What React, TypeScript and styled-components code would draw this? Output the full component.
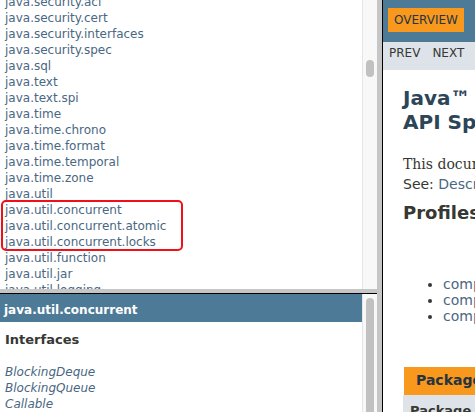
import React from "react";
import styled, { createGlobalStyle } from "styled-components";

const GlobalStyle = createGlobalStyle`
  html, body { margin: 0; padding: 0; background: #fff; }
  body {
    font-family: 'DejaVu Sans', 'Liberation Sans', Arial, sans-serif;
    font-size: 14px;
    color: #353833;
  }
  #root { width: 475px; height: 412px; overflow: hidden; }
`;

const Page = styled.div`
  display: flex;
  width: 475px;
  height: 412px;
  overflow: hidden;
`;

const LeftSet = styled.div`
  flex: 0 0 377px;
  display: flex;
  flex-direction: column;
`;

const Frame = styled.div<{ $h?: number }>`
  display: flex;
  flex: ${(p) => (p.$h ? `0 0 ${p.$h}px` : "1 1 auto")};
  min-height: 0;
  overflow: hidden;
  background: #fff;
`;

const FrameBody = styled.div`
  flex: 1;
  min-width: 0;
  overflow: hidden;
`;

const ScrollTrack = styled.div<{ $top: number }>`
  flex: 0 0 15px;
  box-sizing: border-box;
  border-left: 1px solid #e6e6e6;
  background: #f8f8f8;
  padding: ${(p) => p.$top}px 0 0 3px;
`;

const Thumb = styled.div<{ $h: number }>`
  width: 8px;
  height: ${(p) => p.$h}px;
  border-radius: 4px;
  background: #c1c1c1;
`;

const HBorder = styled.div`
  flex: 0 0 4px;
  background: #c6c6c6;
  border-bottom: 1px solid #000;
`;

const VBorder = styled.div`
  flex: 0 0 5px;
  background: #c6c6c6;
  border-right: 1px solid #000;
`;

const PackageList = styled.ul`
  list-style: none;
  margin: -7px 0 0 0;
  padding: 0 0 0 5px;
  font-size: 12px;
`;

const PackageItem = styled.li`
  padding-top: 2px;
  line-height: 14px;
  color: #4a6782;
  white-space: nowrap;
`;

const Highlight = styled.div`
  position: relative;
  &::after {
    content: "";
    position: absolute;
    left: -4px;
    top: -1px;
    width: 182px;
    height: 51px;
    box-sizing: border-box;
    border: 2px solid #f0101a;
    border-radius: 5px;
    pointer-events: none;
  }
`;

const Bar = styled.h1`
  margin: 0;
  height: 28px;
  box-sizing: border-box;
  padding: 9px 0 0 4px;
  background: #4d7a97;
  color: #fff;
  font-size: 12px;
  font-weight: bold;
  line-height: 14px;
  white-space: nowrap;
`;

const GroupHeading = styled.h2`
  margin: 10px 0 0 5px;
  font-size: 13px;
  font-weight: bold;
  color: #353833;
`;

const ClassList = styled.ul`
  list-style: none;
  margin: 16px 0 0 0;
  padding: 0 0 0 5px;
  font-size: 12px;
`;

const ClassItem = styled.li`
  padding-top: 2px;
  line-height: 14px;
  font-style: italic;
  color: #4a6782;
  white-space: nowrap;
`;

const RightFrame = styled.div`
  flex: 1 1 auto;
  min-width: 0;
  overflow: hidden;
  background: #fff;
`;

const RightInner = styled.div`
  width: 640px;
`;

const TopNav = styled.div`
  height: 42px;
  box-sizing: border-box;
  padding: 8px 0 0 5px;
  background: #4d7a97;
`;

const NavCell = styled.span`
  display: inline-block;
  padding: 5px 6px;
  background: #f8981d;
  color: #253441;
  font-size: 12px;
  line-height: 14px;
  text-transform: uppercase;
`;

const SubNav = styled.div`
  height: 28px;
  display: flex;
  background: #dee3e9;
  font-size: 12px;
`;

const SubNavItem = styled.span`
  padding: 4px 6px 0;
  line-height: 14px;
  color: #353833;
`;

const Content = styled.div`
  margin: 0 20px;
`;

const Title = styled.h1`
  margin: 16px 0 0;
  font-size: 20px;
  font-weight: bold;
  color: #2c4557;
  white-space: nowrap;
`;

const Block = styled.div`
  margin-top: 22px;
  font-family: 'DejaVu Serif', 'Liberation Serif', Georgia, serif;
  font-size: 14px;
  white-space: nowrap;
`;

const SeeLine = styled.p`
  margin: 4px 0 0;
  font-size: 14px;
  white-space: nowrap;
`;

const Link = styled.a`
  color: #4a6782;
  text-decoration: none;
`;

const SectionHeading = styled.h2`
  margin: 10px 0 0;
  font-size: 18px;
  font-weight: bold;
  color: #353833;
`;

const ProfileList = styled.ul`
  margin: 53px 0 0;
  padding-left: 40px;
  font-size: 14px;
`;

const ProfileItem = styled.li`
  color: #353833;
`;

const Caption = styled.div`
  margin: 43px 0 0 1px;
  display: flex;
`;

const CaptionTab = styled.span`
  display: inline-block;
  height: 16px;
  padding: 5px 12px 7px;
  background: #f8981d;
  color: #253441;
  font-weight: bold;
  font-size: 14px;
  line-height: 16px;
  white-space: nowrap;
`;

const HeaderRow = styled.div`
  background: #dee3e9;
  padding: 8px 3px 3px 7px;
  font-size: 13px;
  font-weight: bold;
  color: #353833;
`;

const packages = [
  "java.security.acl",
  "java.security.cert",
  "java.security.interfaces",
  "java.security.spec",
  "java.sql",
  "java.text",
  "java.text.spi",
  "java.time",
  "java.time.chrono",
  "java.time.format",
  "java.time.temporal",
  "java.time.zone",
  "java.util",
];

const highlighted = [
  "java.util.concurrent",
  "java.util.concurrent.atomic",
  "java.util.concurrent.locks",
];

const after = ["java.util.function", "java.util.jar", "java.util.logging"];

const interfaces = ["BlockingDeque", "BlockingQueue", "Callable"];

export default function App() {
  return (
    <>
      <GlobalStyle />
      <Page>
        <LeftSet>
          <Frame $h={289}>
            <FrameBody>
              <PackageList>
                {packages.map((p) => (
                  <PackageItem key={p}>{p}</PackageItem>
                ))}
                <Highlight>
                  {highlighted.map((p) => (
                    <PackageItem key={p}>{p}</PackageItem>
                  ))}
                </Highlight>
                {after.map((p) => (
                  <PackageItem key={p}>{p}</PackageItem>
                ))}
              </PackageList>
            </FrameBody>
            <ScrollTrack $top={60}>
              <Thumb $h={17} />
            </ScrollTrack>
          </Frame>
          <HBorder />
          <Frame>
            <FrameBody>
              <Bar>java.util.concurrent</Bar>
              <GroupHeading>Interfaces</GroupHeading>
              <ClassList>
                {interfaces.map((c) => (
                  <ClassItem key={c}>{c}</ClassItem>
                ))}
              </ClassList>
            </FrameBody>
            <ScrollTrack $top={4}>
              <Thumb $h={200} />
            </ScrollTrack>
          </Frame>
        </LeftSet>
        <VBorder />
        <RightFrame>
          <RightInner>
            <TopNav>
              <NavCell>Overview</NavCell>
            </TopNav>
            <SubNav>
              <SubNavItem>PREV</SubNavItem>
              <SubNavItem>NEXT</SubNavItem>
            </SubNav>
            <Content>
              <Title>
                Java™ Platform, Standard Edition 8
                <br />
                API Specification
              </Title>
              <Block>
                This document is the API specification for the Java™ Platform, Standard Edition.
              </Block>
              <SeeLine>
                See: <Link href="#description">Description</Link>
              </SeeLine>
              <SectionHeading>Profiles</SectionHeading>
              <ProfileList>
                <ProfileItem><Link href="#c1">compact1</Link></ProfileItem>
                <ProfileItem><Link href="#c2">compact2</Link></ProfileItem>
                <ProfileItem><Link href="#c3">compact3</Link></ProfileItem>
              </ProfileList>
              <Caption>
                <CaptionTab>Packages</CaptionTab>
              </Caption>
              <HeaderRow>Package</HeaderRow>
            </Content>
          </RightInner>
        </RightFrame>
      </Page>
    </>
  );
}
